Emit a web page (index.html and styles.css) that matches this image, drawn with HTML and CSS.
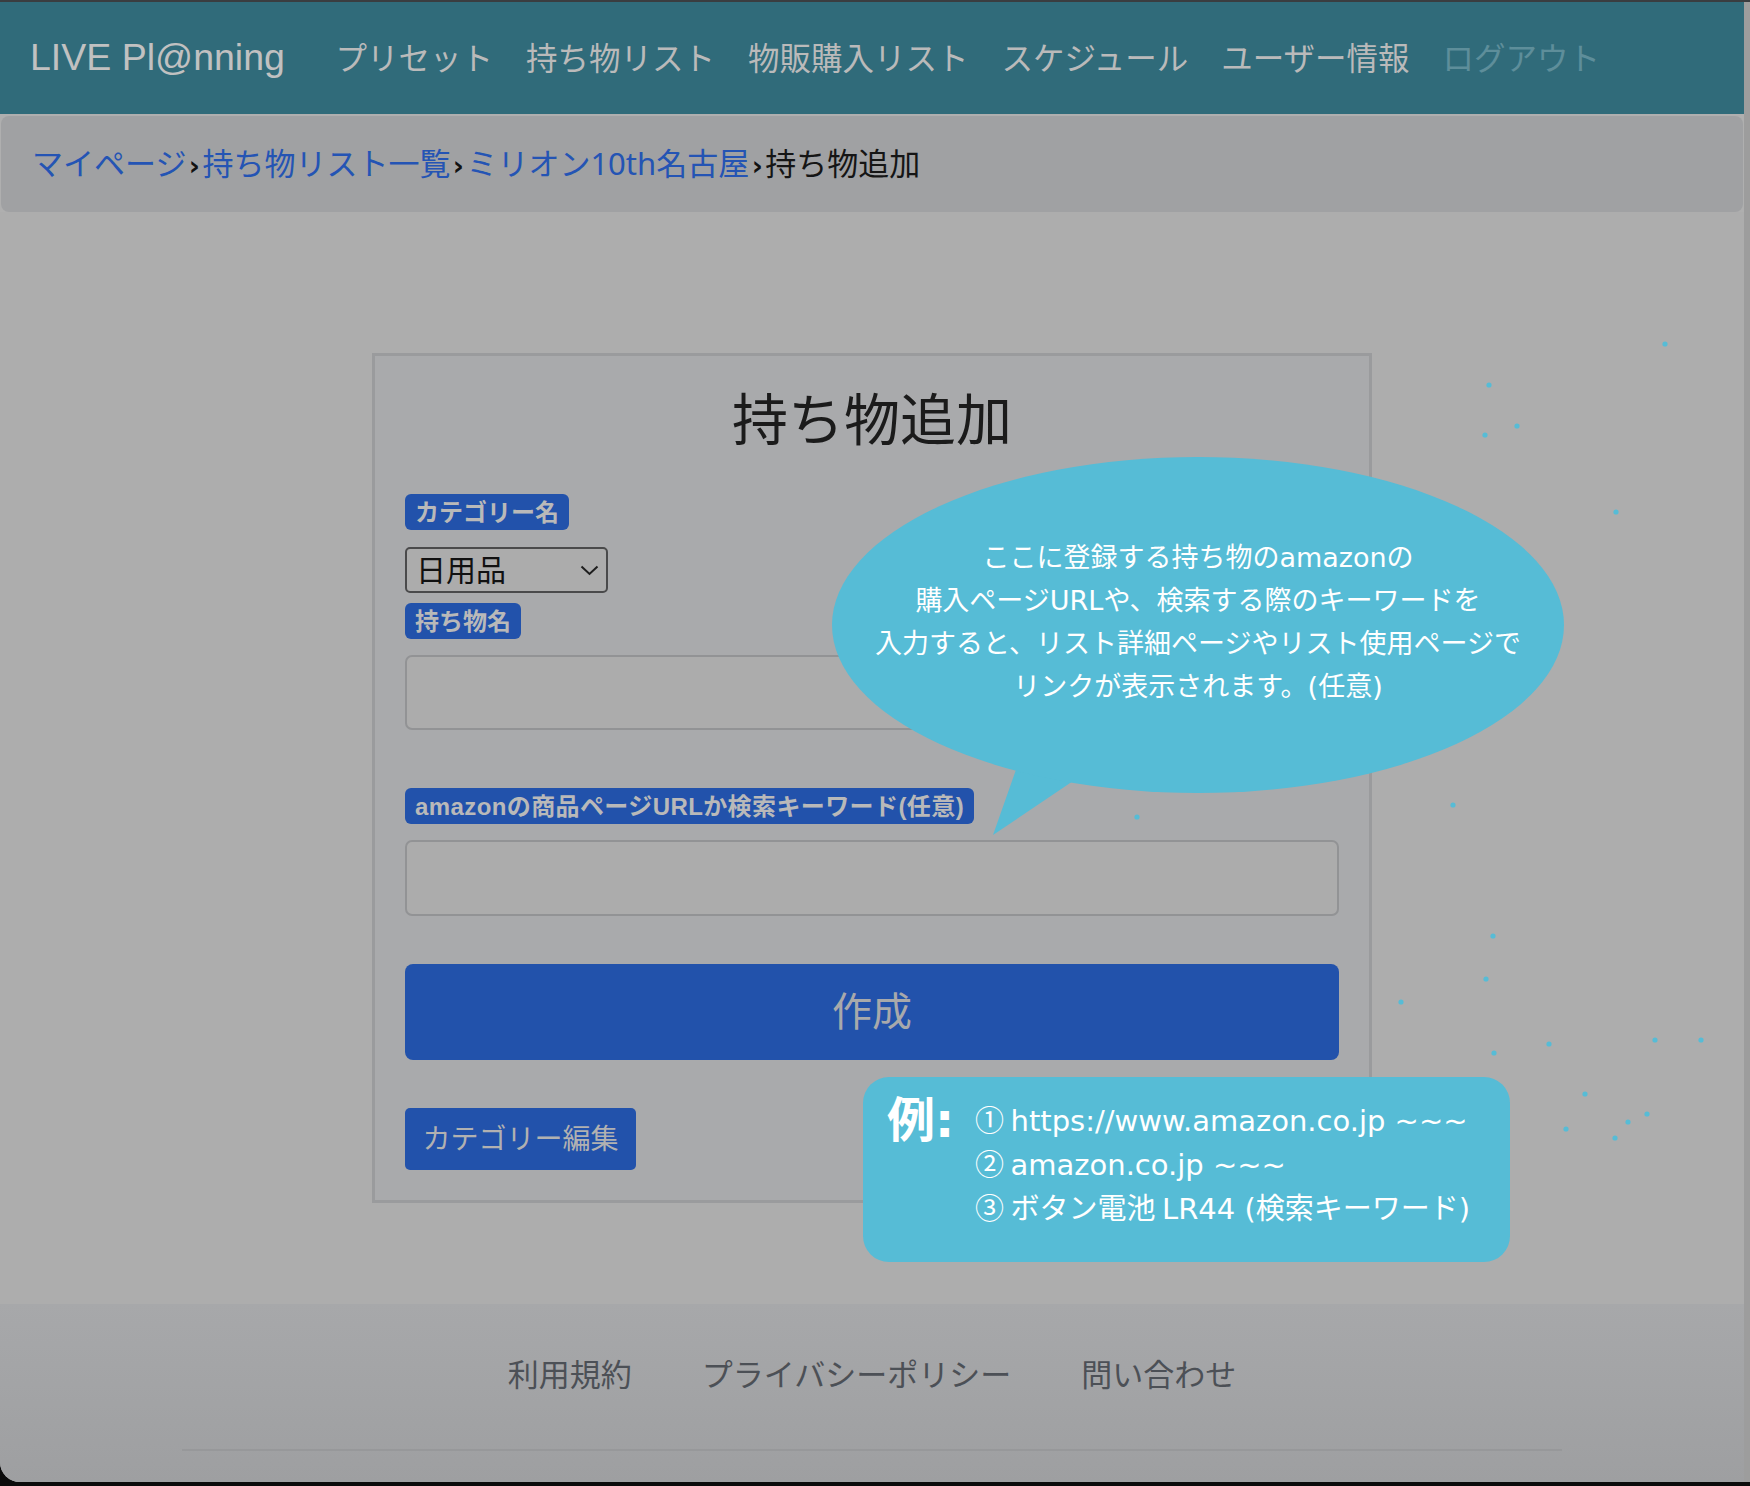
FILE: index.html
```html
<!DOCTYPE html>
<html lang="ja">
<head>
<meta charset="utf-8">
<title>持ち物追加 | LIVE Pl@nning</title>
<link rel="stylesheet" href="styles.css">
</head>
<body>
<div class="window">
  <div class="page">
    <header class="navbar">
      <a class="brand">LIVE Pl@nning</a>
      <nav class="nav">
        <a class="nav-link">プリセット</a>
        <a class="nav-link">持ち物リスト</a>
        <a class="nav-link">物販購入リスト</a>
        <a class="nav-link">スケジュール</a>
        <a class="nav-link">ユーザー情報</a>
        <a class="nav-link nav-muted">ログアウト</a>
      </nav>
    </header>
    <div class="crumbs">
      <a class="crumb-link">マイページ</a><span class="sep">›</span><a class="crumb-link">持ち物リスト一覧</a><span class="sep">›</span><a class="crumb-link">ミリオン<span class="lat">10th</span>名古屋</a><span class="sep">›</span><span class="crumb-current">持ち物追加</span>
    </div>
    <main class="main">
      <section class="card">
        <h1 class="title">持ち物追加</h1>
        <span class="badge badge-cat">カテゴリー名</span>
        <div class="select">
          <span class="select-text">日用品</span>
          <svg class="chev" width="19" height="11" viewBox="0 0 19 11"><polyline points="1.5,1.5 9.5,9 17.5,1.5" fill="none" stroke="#1e1e1e" stroke-width="2"/></svg>
        </div>
        <span class="badge badge-name">持ち物名</span>
        <input class="field field-name" type="text">
        <span class="badge badge-amz"><span class="lat">amazon</span>の商品ページ<span class="lat">URL</span>か検索キーワード<span class="lat">(</span>任意<span class="lat">)</span></span>
        <input class="field field-amz" type="text">
        <button class="btn-create">作成</button>
        <button class="btn-cat">カテゴリー編集</button>
      </section>
    </main>
    <footer class="footer">
      <div class="footer-links">
        <a class="footer-link">利用規約</a>
        <a class="footer-link">プライバシーポリシー</a>
        <a class="footer-link">問い合わせ</a>
      </div>
      <div class="footer-rule"></div>
    </footer>
  </div>
  <div class="strip"></div>

  <svg class="deco" width="1750" height="1486" viewBox="0 0 1750 1486">
    <polygon points="1018,762 1082,773 993,833" fill="#56bcd6"/>
    <g fill="#56bcd6">
      <circle cx="1665" cy="342" r="2.6"/>
      <circle cx="1489" cy="383" r="2.6"/>
      <circle cx="1485" cy="433" r="2.6"/>
      <circle cx="1517" cy="424" r="2.6"/>
      <circle cx="1616" cy="510" r="2.6"/>
      <circle cx="1453" cy="803" r="2.6"/>
      <circle cx="1137" cy="815" r="2.6"/>
      <circle cx="1493" cy="934" r="2.6"/>
      <circle cx="1486" cy="977" r="2.6"/>
      <circle cx="1401" cy="1000" r="2.6"/>
      <circle cx="1494" cy="1051" r="2.6"/>
      <circle cx="1549" cy="1042" r="2.6"/>
      <circle cx="1655" cy="1038" r="2.6"/>
      <circle cx="1701" cy="1038" r="2.6"/>
      <circle cx="1585" cy="1092" r="2.6"/>
      <circle cx="1566" cy="1127" r="2.6"/>
      <circle cx="1628" cy="1120" r="2.6"/>
      <circle cx="1647" cy="1112" r="2.6"/>
      <circle cx="1615" cy="1136" r="2.6"/>
    </g>
  </svg>

  <div class="bubble">
    <div class="bubble-text">
      <div class="bl">ここに登録する持ち物の<span class="lat">amazon</span>の</div>
      <div class="bl">購入ページ<span class="lat">URL</span>や、検索する際のキーワードを</div>
      <div class="bl">入力すると、リスト詳細ページやリスト使用ページで</div>
      <div class="bl">リンクが表示されます。<span class="lat">(</span>任意<span class="lat">)</span></div>
    </div>
  </div>

  <div class="example">
    <div class="ex-label">例<span class="lat">:</span></div>
    <div class="ex-lines">
      <div class="el"><span class="num">①</span> <span class="lat">https://www.amazon.co.jp ~~~</span></div>
      <div class="el"><span class="num">②</span> <span class="lat">amazon.co.jp ~~~</span></div>
      <div class="el"><span class="num">③</span> ボタン電池 <span class="lat">LR44 (</span>検索キーワード<span class="lat">)</span></div>
    </div>
  </div>
</div>
</body>
</html>
```
FILE: styles.css
```css
* { box-sizing: border-box; }
html, body { margin: 0; padding: 0; }
body {
  background: #0b0b0b;
  font-family: "Noto Sans CJK JP", "Noto Sans", sans-serif;
}
a { text-decoration: none; }

.window {
  position: relative;
  width: 1750px;
  height: 1486px;
  display: grid;
  grid-template-columns: 1744px 6px;
  border-top: 2px solid #3a3d40;
  padding-bottom: 4px;
  background: #0b0b0b;
  overflow: hidden;
}
.page {
  display: flex;
  flex-direction: column;
  background: #afafaf;
  border-bottom-left-radius: 20px;
  overflow: hidden;
}
.strip { background: #9d9d9d; }

/* navbar */
.navbar {
  height: 112px;
  flex: none;
  background: #306b7a;
  display: flex;
  align-items: center;
  padding-left: 30px;
  padding-bottom: 3px;
}
.brand {
  font-family: "Liberation Sans", Arial, sans-serif;
  font-size: 37.5px;
  color: #c1c1c1;
  margin-right: 34px;
  line-height: 1;
  padding-top: 2px;
}
.nav { display: flex; align-items: center; }
.nav-link {
  font-size: 31.5px;
  line-height: 1;
  color: #bababa;
  padding: 0 16.5px;
}
.nav-muted { color: #5e8e9a; }

/* breadcrumb */
.crumbs {
  flex: none;
  height: 96px;
  margin: 2px 1px 0 1px;
  background: #a0a1a3;
  border-radius: 8px;
  padding-left: 31px;
  font-size: 31px;
  line-height: 92px;
  white-space: nowrap;
}
.crumb-link { color: #2454b4; }
.crumb-current { color: #151515; }
.sep {
  display: inline-block;
  width: 16px;
  text-align: center;
  color: #121212;
  font-family: "DejaVu Sans", sans-serif;
  font-weight: bold;
  font-size: 27px;
}
.crumbs .lat { font-family: "Noto Sans", sans-serif; }

/* main */
.main {
  flex: none;
  height: 1092px;
  background: #adadad;
  padding-top: 141px;
}
.card {
  width: 1000px;
  margin: 0 auto;
  border: 3px solid #9a9b9d;
  background: #a9aaac;
  padding: 29px 30px 30px 30px;
  display: flex;
  flex-direction: column;
  align-items: flex-start;
}
.title {
  align-self: stretch;
  margin: -3px 0 45px 0;
  text-align: center;
  font-size: 56px;
  line-height: 67px;
  font-weight: 400;
  color: #1b1b1b;
}
.badge {
  display: inline-block;
  height: 36px;
  line-height: 33px;
  padding: 0 10px 3px 10px;
  border-radius: 6px;
  background: #2252ab;
  color: #b9b9b9;
  font-size: 24px;
  font-weight: 700;
  white-space: nowrap;
}
.badge .lat { font-family: "Liberation Sans", Arial, sans-serif; font-weight: 700; }
.badge-cat { margin-bottom: 17px; }
.badge-name { margin-bottom: 16px; }
.badge-amz { margin-bottom: 16px; letter-spacing: 0.4px; }

.select {
  width: 203px;
  height: 46px;
  border: 2px solid #4a4a4b;
  border-radius: 5px;
  background: #acacac;
  display: flex;
  align-items: center;
  justify-content: space-between;
  padding: 0 7px 0 9px;
  margin-bottom: 10px;
}
.select-text { font-size: 30px; color: #111; line-height: 1; padding-bottom: 5px; }
.chev { display: block; }

.field {
  align-self: stretch;
  display: block;
  -webkit-appearance: none;
  appearance: none;
  border: 2px solid #929395;
  border-radius: 7px;
  background: #acacac;
  font: inherit;
  margin: 0;
}
.field-name { height: 75px; margin-bottom: 58px; }
.field-amz { height: 76px; margin-bottom: 48px; }

.btn-create {
  align-self: stretch;
  height: 96px;
  border: none;
  border-radius: 8px;
  background: #2252ab;
  color: #a8a9ab;
  font-family: "Noto Sans CJK JP", sans-serif;
  font-size: 40px;
  line-height: 1;
  margin: 0 0 48px 0;
  padding: 0 0 6px 0;
}
.btn-cat {
  width: 231px;
  height: 62px;
  border: none;
  border-radius: 5px;
  background: #2252ab;
  color: #b1b1b1;
  font-family: "Noto Sans CJK JP", sans-serif;
  font-size: 28px;
  line-height: 1;
  padding: 0 0 4px 0;
  margin: 0;
  white-space: nowrap;
}

/* footer */
.footer {
  flex: 1;
  background: linear-gradient(#a7a8aa, #9e9fa1);
  padding-top: 49px;
  display: flex;
  flex-direction: column;
  align-items: center;
}
.footer-links {
  display: flex;
  gap: 70px;
  height: 40px;
  align-items: center;
  margin-bottom: 56px;
}
.footer-link { font-size: 31px; line-height: 40px; color: #4c5056; }
.footer-rule { width: 1380px; height: 2px; background: #97989a; }

/* overlays */
.deco {
  position: absolute;
  left: 0;
  top: 0;
  pointer-events: none;
}
.bubble {
  position: absolute;
  left: 832px;
  top: 455px;
  width: 732px;
  height: 336px;
  border-radius: 50%;
  background: #56bcd6;
  display: flex;
  align-items: center;
  justify-content: center;
}
.bubble-text {
  margin: 0 0 11px 0;
  text-align: center;
  color: #fff;
  font-size: 27px;
  white-space: nowrap;
}
.bl { height: 43px; line-height: 43px; }
.bl .lat { line-height: 1; }
.lat { font-family: "DejaVu Sans", sans-serif; }

.example {
  position: absolute;
  left: 863px;
  top: 1075px;
  width: 647px;
  height: 185px;
  border-radius: 26px;
  background: #56bcd6;
  padding: 19px 0 0 24px;
  display: flex;
  align-items: flex-start;
  color: #fff;
}
.ex-label {
  flex: none;
  width: 88px;
  font-size: 48px;
  font-weight: 700;
  line-height: 46px;
  height: 46px;
  margin-top: -3px;
}
.ex-label .lat { font-weight: 700; line-height: 1; }
.ex-lines {
  font-size: 29px;
  white-space: nowrap;
}
.el { height: 44px; line-height: 44px; }
.el .lat, .el .num { line-height: 1; }
.num { font-family: "Noto Sans CJK JP", sans-serif; }
```
